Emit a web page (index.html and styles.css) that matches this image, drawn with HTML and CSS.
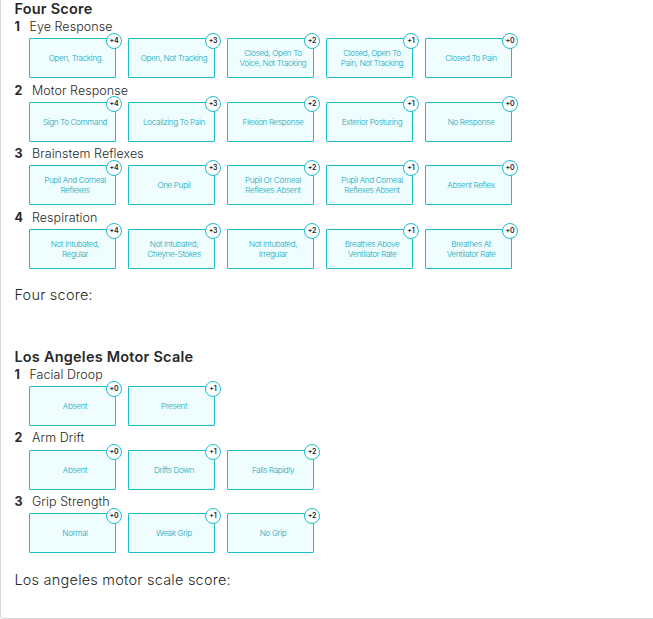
FILE: index.html
```html
<!DOCTYPE html>
<html lang="en">
<head>
<meta charset="utf-8">
<title>Stroke Scales</title>
<link rel="stylesheet" href="styles.css">
</head>
<body>
<main class="panel">
  <section class="scale scale-four">
    <h2 class="title">Four Score</h2>
    <div class="item">
      <h3 class="label"><b class="num first">1</b>Eye Response</h3>
      <div class="options">
        <div class="option">Open, Tracking<span class="badge">+4</span></div>
        <div class="option">Open, Not Tracking<span class="badge">+3</span></div>
        <div class="option">Closed, Open To<br>Voice, Not Tracking<span class="badge">+2</span></div>
        <div class="option">Closed, Open To<br>Pain, Not Tracking<span class="badge">+1</span></div>
        <div class="option">Closed To Pain<span class="badge">+0</span></div>
      </div>
    </div>
    <div class="item">
      <h3 class="label"><b class="num">2</b>Motor Response</h3>
      <div class="options">
        <div class="option">Sign To Command<span class="badge">+4</span></div>
        <div class="option">Localizing To Pain<span class="badge">+3</span></div>
        <div class="option">Flexion Response<span class="badge">+2</span></div>
        <div class="option">Exterior Posturing<span class="badge">+1</span></div>
        <div class="option">No Response<span class="badge">+0</span></div>
      </div>
    </div>
    <div class="item">
      <h3 class="label"><b class="num">3</b>Brainstem Reflexes</h3>
      <div class="options">
        <div class="option">Pupil And Corneal<br>Reflexes<span class="badge">+4</span></div>
        <div class="option">One Pupil<span class="badge">+3</span></div>
        <div class="option">Pupil Or Corneal<br>Reflexes Absent<span class="badge">+2</span></div>
        <div class="option">Pupil And Corneal<br>Reflexes Absent<span class="badge">+1</span></div>
        <div class="option">Absent Reflex<span class="badge">+0</span></div>
      </div>
    </div>
    <div class="item">
      <h3 class="label"><b class="num">4</b>Respiration</h3>
      <div class="options">
        <div class="option">Not Intubated,<br>Regular<span class="badge">+4</span></div>
        <div class="option">Not Intubated,<br>Cheyne-Stokes<span class="badge">+3</span></div>
        <div class="option">Not Intubated,<br>Irregular<span class="badge">+2</span></div>
        <div class="option">Breathes Above<br>Ventilator Rate<span class="badge">+1</span></div>
        <div class="option">Breathes At<br>Ventilator Rate<span class="badge">+0</span></div>
      </div>
    </div>
    <p class="score">Four score:</p>
  </section>
  <section class="scale">
    <h2 class="title">Los Angeles Motor Scale</h2>
    <div class="item">
      <h3 class="label"><b class="num first">1</b>Facial Droop</h3>
      <div class="options">
        <div class="option">Absent<span class="badge">+0</span></div>
        <div class="option">Present<span class="badge">+1</span></div>
      </div>
    </div>
    <div class="item">
      <h3 class="label"><b class="num">2</b>Arm Drift</h3>
      <div class="options">
        <div class="option">Absent<span class="badge">+0</span></div>
        <div class="option">Drifts Down<span class="badge">+1</span></div>
        <div class="option">Falls Rapidly<span class="badge">+2</span></div>
      </div>
    </div>
    <div class="item">
      <h3 class="label"><b class="num">3</b>Grip Strength</h3>
      <div class="options">
        <div class="option">Normal<span class="badge">+0</span></div>
        <div class="option">Weak Grip<span class="badge">+1</span></div>
        <div class="option">No Grip<span class="badge">+2</span></div>
      </div>
    </div>
    <p class="score">Los angeles motor scale score:</p>
  </section>
</main>
</body>
</html>
```
FILE: styles.css
```css
* { box-sizing: border-box; margin: 0; }

body {
  background: #fff;
  color: #282828;
  font-family: Inter, "Open Sans", sans-serif;
  overflow: hidden;
}

.panel {
  width: 663px;
  height: 619px;
  padding-left: 13.4px;
  border-left: 1px solid #d8d8d8;
  border-bottom: 1px solid #d8d8d8;
  border-bottom-left-radius: 4px;
}

.scale-four { height: 347.85px; }

.title {
  height: 18px;
  font-size: 14.5px;
  font-weight: 600;
  line-height: 18px;
  letter-spacing: 0.22px;
  white-space: nowrap;
}

.item { height: 63.6px; }

.label {
  display: flex;
  height: 20.2px;
  font-size: 12.5px;
  font-weight: 300;
  letter-spacing: 0.06px;
  line-height: 18px;
  white-space: nowrap;
}

.num { width: 17.6px; font-weight: 700; }
.num.first { width: 15px; }

.options {
  display: flex;
  gap: 12px;
  padding-left: 14.6px;
}

.option {
  position: relative;
  display: flex;
  flex-direction: column;
  flex: none;
  align-items: center;
  justify-content: center;
  width: 87px;
  height: 40px;
  padding-left: 5px;
  border: 1px solid #1bbdcc;
  border-radius: 1px;
  background: #effdff;
  color: #12a9bc;
  font-size: 8.2px;
  font-weight: 350;
  line-height: 10px;
  text-align: center;
  white-space: nowrap;
  letter-spacing: -0.4px;
}

.badge {
  position: absolute;
  top: -6.5px;
  right: -7px;
  width: 16px;
  height: 16px;
  border: 1px solid #1bbdcc;
  border-radius: 50%;
  background: #fff;
  color: #222;
  font-size: 7px;
  font-weight: 600;
  line-height: 14px;
  letter-spacing: -0.2px;
}

.score {
  padding-top: 13px;
  font-size: 14.5px;
  font-weight: 300;
  line-height: 20px;
  letter-spacing: 0.22px;
}
```
